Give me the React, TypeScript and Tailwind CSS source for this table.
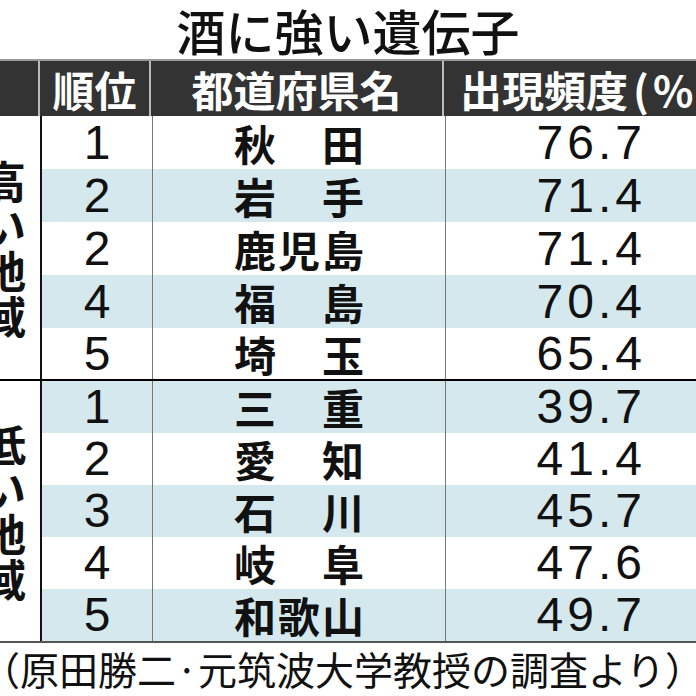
import React from 'react'

const jp = "font-['Noto_Sans_CJK_JP',sans-serif]"
const num = "font-['Liberation_Sans',Arial,sans-serif]"

type Row = { rank: string; pref: string[]; value: string }

const high: Row[] = [
    { rank: '1', pref: ['秋', '田'], value: '76.7' },
    { rank: '2', pref: ['岩', '手'], value: '71.4' },
    { rank: '2', pref: ['鹿', '児', '島'], value: '71.4' },
    { rank: '4', pref: ['福', '島'], value: '70.4' },
    { rank: '5', pref: ['埼', '玉'], value: '65.4' },
]

const low: Row[] = [
    { rank: '1', pref: ['三', '重'], value: '39.7' },
    { rank: '2', pref: ['愛', '知'], value: '41.4' },
    { rank: '3', pref: ['石', '川'], value: '45.7' },
    { rank: '4', pref: ['岐', '阜'], value: '47.6' },
    { rank: '5', pref: ['和', '歌', '山'], value: '49.7' },
]

const Group = ({ label, rows, blueFirst, rowH, last }: { label: string[]; rows: Row[]; blueFirst: boolean; rowH: string; last: boolean }) => {
    return (
        <div className={`flex ${last ? 'border-b-2 border-[#555]' : 'border-b-2 border-black'}`}>
            <div className="w-[42px] shrink-0 border-r-2 border-[#111] flex flex-col justify-center overflow-hidden">
                <div className={`${jp} font-bold text-[44px] leading-[45px] text-[#111] -ml-[18px] flex flex-col`}>
                    {label.map((c, i) => (
                        <span key={i} className="block w-[44px] text-center">{c}</span>
                    ))}
                </div>
            </div>
            <div className="flex-1 flex flex-col">
                {rows.map((r, i) => {
                    const blue = blueFirst ? i % 2 === 0 : i % 2 === 1
                    return (
                        <div key={i} className={`flex ${rowH} ${blue ? 'bg-[#d4e8ee]' : 'bg-white'} text-[#111]`}>
                            <div className={`w-[111px] shrink-0 border-r border-[#777] flex items-center justify-center ${num} text-[48px] leading-none`}>
                                {r.rank}
                            </div>
                            <div className="w-[293px] shrink-0 border-r border-[#777] flex items-center justify-center">
                                <div className={`w-[130px] flex justify-between ${jp} font-bold text-[42px] leading-none`}>
                                    {r.pref.map((c, j) => (
                                        <span key={j}>{c}</span>
                                    ))}
                                </div>
                            </div>
                            <div className={`flex-1 flex items-center justify-end pr-[50px] ${num} text-[48px] leading-none tracking-[4px]`}>
                                {r.value}
                            </div>
                        </div>
                    )
                })}
            </div>
        </div>
    )
}

const App = () => {
    return (
        <div className="w-[696px] h-[696px] bg-white overflow-hidden">
            <h1 className={`${jp} font-medium text-[49px] leading-[59px] h-[59px] text-center text-[#111]`}>
                酒に強い遺伝子
            </h1>
            <div className="border-t-2 border-[#999]">
                <div className={`flex h-[55px] bg-[#333] text-white ${jp} font-bold text-[42px] leading-none`}>
                    <div className="w-[40px] shrink-0 border-r-2 border-[#bbb]" />
                    <div className="w-[111px] shrink-0 border-r-2 border-[#bbb] flex items-center justify-center">順位</div>
                    <div className="w-[293px] shrink-0 border-r-2 border-[#bbb] flex items-center justify-center">都道府県名</div>
                    <div className="flex-1 flex items-center pl-[16px] whitespace-nowrap overflow-hidden">
                        出現頻度<span className="ml-[5px] tracking-[4px]">(%)</span>
                    </div>
                </div>
                <Group label={['高', 'い', '地', '域']} rows={high} blueFirst={false} rowH="h-[53px] last:h-[51px]" last={false} />
                <Group label={['低', 'い', '地', '域']} rows={low} blueFirst={true} rowH="h-[52px]" last={true} />
            </div>
            <p className={`${jp} text-[39px] leading-[48px] text-[#111] whitespace-nowrap -ml-[19px] pt-[1px]`}>
                （原田勝二·元筑波大学教授の調査より）
            </p>
        </div>
    )
}

export default App
